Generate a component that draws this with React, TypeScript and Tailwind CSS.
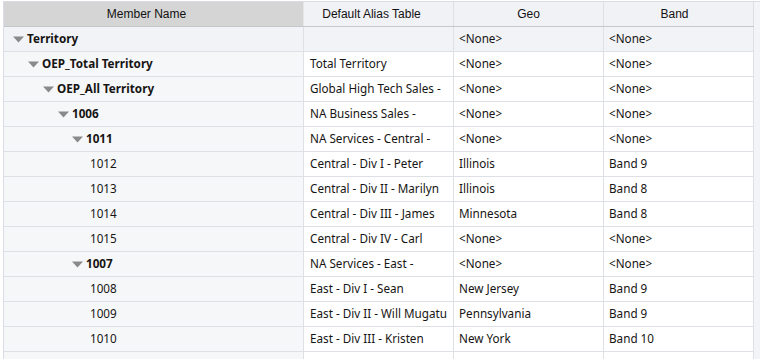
import React from 'react'

type Row = {
  name: string
  level: number
  parent: boolean
  alias: string
  geo: string
  band: string
}

const rows: Row[] = [
  { name: 'Territory', level: 0, parent: true, alias: '', geo: '<None>', band: '<None>' },
  { name: 'OEP_Total Territory', level: 1, parent: true, alias: 'Total Territory', geo: '<None>', band: '<None>' },
  { name: 'OEP_All Territory', level: 2, parent: true, alias: 'Global High Tech Sales -', geo: '<None>', band: '<None>' },
  { name: '1006', level: 3, parent: true, alias: 'NA Business Sales -', geo: '<None>', band: '<None>' },
  { name: '1011', level: 4, parent: true, alias: 'NA Services - Central -', geo: '<None>', band: '<None>' },
  { name: '1012', level: 5, parent: false, alias: 'Central - Div I - Peter', geo: 'Illinois', band: 'Band 9' },
  { name: '1013', level: 5, parent: false, alias: 'Central - Div II - Marilyn', geo: 'Illinois', band: 'Band 8' },
  { name: '1014', level: 5, parent: false, alias: 'Central - Div III - James', geo: 'Minnesota', band: 'Band 8' },
  { name: '1015', level: 5, parent: false, alias: 'Central - Div IV - Carl', geo: '<None>', band: '<None>' },
  { name: '1007', level: 4, parent: true, alias: 'NA Services - East -', geo: '<None>', band: '<None>' },
  { name: '1008', level: 5, parent: false, alias: 'East - Div I - Sean', geo: 'New Jersey', band: 'Band 9' },
  { name: '1009', level: 5, parent: false, alias: 'East - Div II - Will Mugatu', geo: 'Pennsylvania', band: 'Band 9' },
  { name: '1010', level: 5, parent: false, alias: 'East - Div III - Kristen', geo: 'New York', band: 'Band 10' },
  { name: '', level: 0, parent: false, alias: '', geo: '', band: '' },
]

const indents = ['pl-[9px]', 'pl-[24px]', 'pl-[39px]', 'pl-[54px]', 'pl-[68px]', 'pl-[86px]']

function Caret() {
  return (
    <svg width="11" height="7" viewBox="0 0 11 7" className="mr-[3px] shrink-0">
      <path d="M0 0.5 H11 L5.5 6.5 Z" fill="#8a8a8a" />
    </svg>
  )
}

export default function App() {
  return (
    <div className="w-[760px] h-[359px] overflow-hidden bg-white pt-px pl-[3px] font-['Noto_Sans',sans-serif] text-[11.7px] text-[#161513]">
      <div className="flex h-full">
        <div className="w-[751px] border-l border-t border-[#d9dce2]">
          <div className="flex h-[25px] border-b border-[#c3c7ce] font-['Liberation_Sans',Arial,sans-serif] text-[12px] text-[#111]">
            <div className="w-[300px] bg-[#d5d5d5] border-r border-[#e4e6ea] flex items-center justify-center pr-[14px]">Member Name</div>
            <div className="w-[150px] bg-[#f1f2f6] border-r border-[#dcdfe4] flex items-center justify-center pr-[14px]">Default Alias Table</div>
            <div className="w-[150px] bg-[#f1f2f6] border-r border-[#dcdfe4] flex items-center justify-center">Geo</div>
            <div className="w-[150px] bg-[#f1f2f6] border-r border-[#dcdfe4] flex items-center justify-center pr-[8px]">Band</div>
          </div>
          {rows.map((r, i) => {
            const first = i === 0
            return (
              <div key={i} className={`flex h-[25px] border-b border-[#dde0e5] ${first ? 'bg-[#f2f3f6]' : ''}`}>
                <div className={`w-[300px] border-r border-[#dde0e5] flex items-center ${first ? '' : 'bg-[#f6f7f9]'} ${indents[r.level]} ${r.parent ? 'font-bold' : ''}`}>
                  {r.parent && <Caret />}
                  <span>{r.name}</span>
                </div>
                <div className="w-[150px] border-r border-[#dde0e5] flex items-center pl-[6px] whitespace-nowrap overflow-hidden">{r.alias}</div>
                <div className="w-[150px] border-r border-[#dde0e5] flex items-center pl-[5px]">{r.geo}</div>
                <div className="w-[150px] border-r border-[#dde0e5] flex items-center pl-[5px]">{r.band}</div>
              </div>
            )
          })}
        </div>
        <div className="flex-1 bg-[#f3f4f7] border-t border-[#d9dce2]" />
      </div>
    </div>
  )
}
